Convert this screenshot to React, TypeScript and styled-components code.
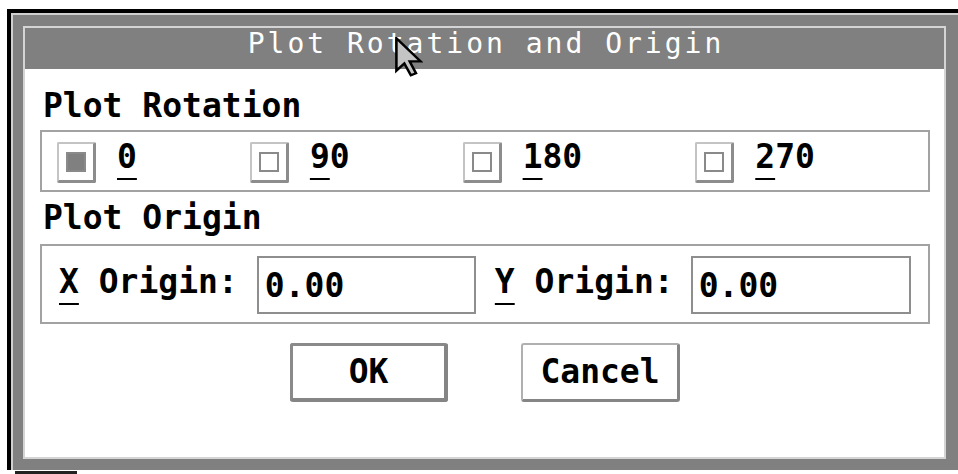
import React from "react";
import styled, { createGlobalStyle } from "styled-components";

const GlobalStyle = createGlobalStyle`
  html, body {
    margin: 0;
    padding: 0;
    background: #ffffff;
    overflow: hidden;
  }
`;

const mono = `"DejaVu Sans Mono", "Liberation Mono", monospace`;

const Page = styled.div`
  width: 958px;
  height: 474px;
  box-sizing: border-box;
  padding: 9px 0 0 7px;
  position: relative;
`;

const Window = styled.div`
  position: relative;
  width: 951px;
  box-sizing: border-box;
  border-top: 4px solid #000;
  border-left: 4px solid #000;
`;

const Frame = styled.div`
  background: #808080;
  box-shadow: inset 2px 2px 0 #d0d0d0;
  padding: 13px 12px 11px 12px;
`;

const Panel = styled.div`
  height: 433px;
  box-sizing: border-box;
  border: 2px solid #d4d4d4;
  background: #ffffff;
  display: flex;
  flex-direction: column;
`;

const TitleBar = styled.div`
  background: #808080;
  color: #ffffff;
  font-family: ${mono};
  font-size: 28px;
  letter-spacing: 3px;
  line-height: 31px;
  height: 31px;
  padding: 0 0 10px 3px;
  text-align: center;
  white-space: pre;
`;

const SectionLabel = styled.div<{ $top: number }>`
  margin: ${(p) => p.$top}px 0 0 18px;
  font-family: ${mono};
  font-weight: bold;
  font-size: 33px;
  line-height: 38px;
  color: #000;
  white-space: pre;
`;

const Group = styled.div<{ $top: number; $height: number }>`
  margin: ${(p) => p.$top}px 14px 0 15px;
  height: ${(p) => p.$height}px;
  box-sizing: border-box;
  border: 2px solid #a2a2a2;
  display: flex;
  align-items: flex-start;
`;

const RadioRow = styled.div`
  display: flex;
  align-items: flex-start;
  gap: 113px;
  padding-left: 15px;
`;

const Option = styled.div`
  display: flex;
  align-items: flex-start;
`;

const Check = styled.div<{ $on?: boolean }>`
  margin-top: 10px;
  width: 39px;
  height: 41px;
  box-sizing: border-box;
  border: 2px solid #c4c4c4;
  border-right-color: #8c8c8c;
  border-bottom-color: #8c8c8c;
  border-right-width: 3px;
  border-bottom-width: 3px;
  border-radius: 2px;
  display: flex;
  align-items: center;
  justify-content: center;
  &::after {
    content: "";
    width: 20px;
    height: 20px;
    box-sizing: border-box;
    border: 2px solid #8a8a8a;
    background: ${(p) => (p.$on ? "#808080" : "#ffffff")};
  }
`;

const Text = styled.span<{ $top: number; $left?: number }>`
  margin: ${(p) => p.$top}px 0 0 ${(p) => p.$left ?? 0}px;
  font-family: ${mono};
  font-weight: bold;
  font-size: 33px;
  line-height: 38px;
  color: #000;
  white-space: pre;
`;

const Key = styled.span`
  text-decoration: underline;
  text-decoration-thickness: 2px;
  text-underline-offset: 10px;
`;

const OriginRow = styled.div`
  display: flex;
  align-items: flex-start;
  padding-left: 17px;
`;

const Field = styled.input<{ $width: number; $gap: number }>`
  margin: 10px 0 0 ${(p) => p.$gap}px;
  width: ${(p) => p.$width}px;
  height: 58px;
  box-sizing: border-box;
  border: 2px solid #8e8e8e;
  border-radius: 0;
  padding: 0 6px;
  outline: none;
  background: #fff;
  font-family: ${mono};
  font-weight: bold;
  font-size: 33px;
  color: #000;
`;

const ButtonRow = styled.div`
  margin-top: 19px;
  display: flex;
  justify-content: center;
  gap: 73px;
  padding-left: 1px;
`;

const Button = styled.button<{ $default?: boolean }>`
  width: ${(p) => (p.$default ? 158 : 159)}px;
  height: 59px;
  box-sizing: border-box;
  background: #fff;
  padding: 0;
  border-style: solid;
  border-radius: 3px;
  border-color: ${(p) => (p.$default ? "#8a8a8a" : "#b0b0b0")};
  border-right-color: #858585;
  border-bottom-color: #858585;
  border-width: ${(p) => (p.$default ? "3px 4px 4px 3px" : "2px 3px 3px 2px")};
  font-family: ${mono};
  font-weight: bold;
  font-size: 33px;
  line-height: 38px;
  color: #000;
  display: flex;
  align-items: center;
  justify-content: center;
`;

const Pointer = styled.svg`
  position: absolute;
  left: 384px;
  top: 24px;
  width: 28px;
  height: 40px;
`;

const Below = styled.div`
  display: flex;
  align-items: flex-start;
  padding-left: 8px;
  height: 4px;
`;

const Scrap = styled.div`
  margin-top: 1px;
  width: 62px;
  height: 3px;
  background: #222;
`;

const options = [
  { key: "0", rest: "", on: true },
  { key: "9", rest: "0" },
  { key: "1", rest: "80" },
  { key: "2", rest: "70" },
];

export default function App() {
  return (
    <>
      <GlobalStyle />
      <Page>
        <Window>
          <Frame>
            <Panel>
              <TitleBar>Plot Rotation and Origin</TitleBar>
              <SectionLabel $top={18}>Plot Rotation</SectionLabel>
              <Group $top={5} $height={62}>
                <RadioRow>
                  {options.map((o) => (
                    <Option key={o.key}>
                      <Check $on={o.on} />
                      <Text $top={6} $left={21}>
                        <Key>{o.key}</Key>
                        {o.rest}
                      </Text>
                    </Option>
                  ))}
                </RadioRow>
              </Group>
              <SectionLabel $top={7}>Plot Origin</SectionLabel>
              <Group $top={7} $height={80}>
                <OriginRow>
                  <Text $top={17}>
                    <Key>X</Key> Origin:
                  </Text>
                  <Field $width={219} $gap={19} value="0.00" readOnly />
                  <Text $top={17} $left={19}>
                    <Key>Y</Key> Origin:
                  </Text>
                  <Field $width={220} $gap={17} value="0.00" readOnly />
                </OriginRow>
              </Group>
              <ButtonRow>
                <Button $default>OK</Button>
                <Button>Cancel</Button>
              </ButtonRow>
            </Panel>
          </Frame>
          <Pointer viewBox="0 0 12 19" preserveAspectRatio="none">
            <path
              d="M0.6 0.6 L0.6 16 L4 12.6 L6.8 18.2 L9 17.2 L6.3 11.6 L11 11.6 Z"
              fill="#c4c4c4"
              stroke="#000"
              strokeWidth="1.1"
              strokeLinejoin="miter"
            />
          </Pointer>
        </Window>
        <Below>
          <Scrap />
        </Below>
      </Page>
    </>
  );
}
